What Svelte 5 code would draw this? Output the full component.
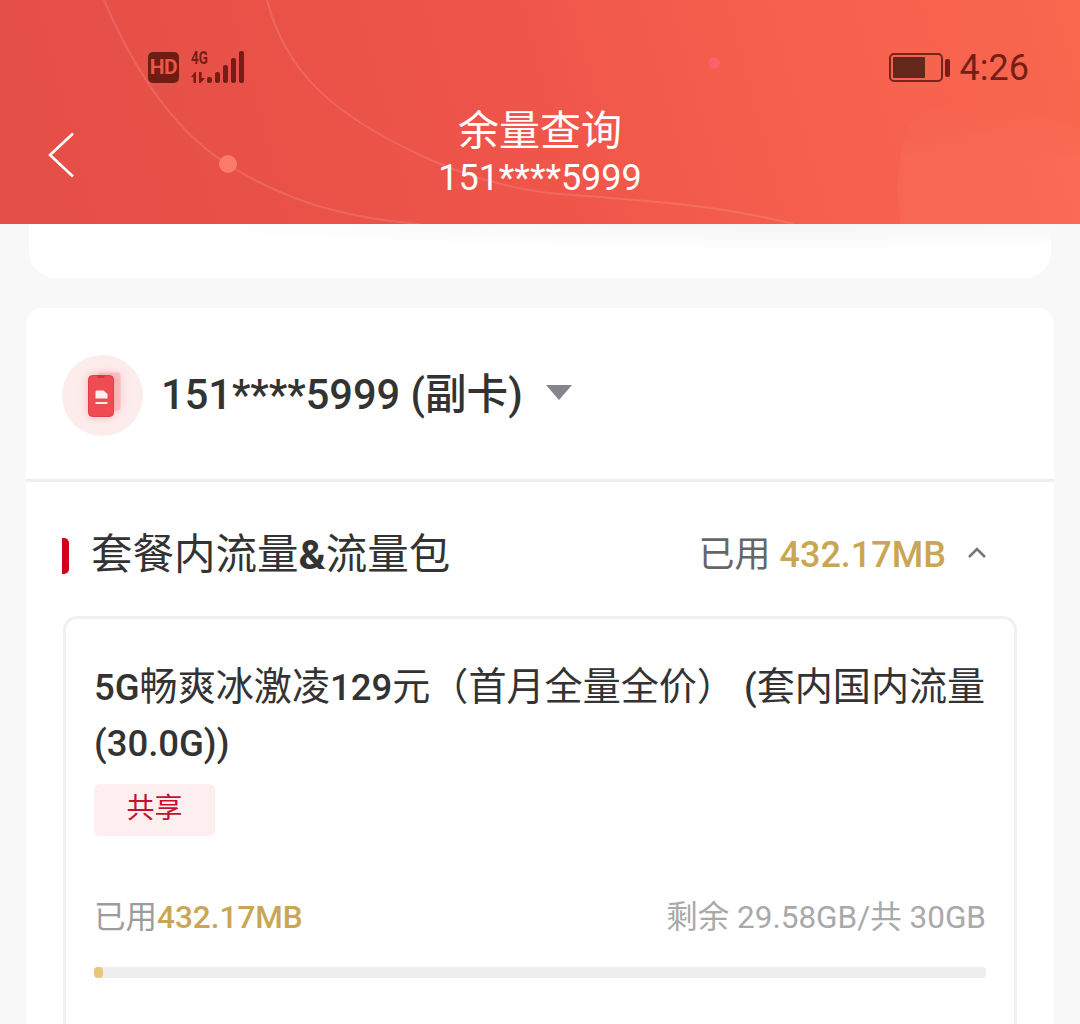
<script>
	const used = '432.17MB';
	const phone = '151****5999';
	const bars = [6, 11, 18, 25, 32];
</script>

<div class="page">
	<header class="top">
		<svg class="deco" viewBox="0 0 1080 224" preserveAspectRatio="none" aria-hidden="true">
			<defs>
				<linearGradient id="blobfade" x1="0" y1="0" x2="0" y2="1">
					<stop offset="0" stop-color="#fff" stop-opacity="0" />
					<stop offset="0.5" stop-color="#fff" stop-opacity="0.035" />
				</linearGradient>
			</defs>
			<path d="M104 0C125 50 165 125 227 164C280 198 340 218 420 224" class="line" />
			<path d="M267 0C285 70 330 115 431 160C480 182 530 192 560 194C640 200 720 205 793 224" class="line" />
			<path d="M900 224C894 170 900 130 925 105C960 100 1040 110 1080 130V224Z" fill="url(#blobfade)" />
			<circle cx="228" cy="164" r="9" fill="#fb7a6c" />
			<circle cx="714" cy="63" r="6" fill="#f9616b" />
		</svg>

		<div class="status">
			<div class="status-left">
				<span class="hd">HD</span>
				<div class="net">
					<span class="net-label">4G</span>
					<svg class="arrows" width="16" height="11" viewBox="0 0 16 11" aria-hidden="true">
						<path d="M4 0L0 5H2.4V11H5V0ZM8 0H10.6V6H14L9.6 11H8Z" fill="#751e15" />
					</svg>
				</div>
				<div class="bars">
					{#each bars as h}
						<i style="height: {h}px"></i>
					{/each}
				</div>
			</div>
			<div class="status-right">
				<span class="battery"><i></i></span>
				<span class="nub"></span>
				<span class="time">4:26</span>
			</div>
		</div>

		<div class="nav">
			<svg class="back" width="28" height="46" viewBox="0 0 28 46" aria-hidden="true">
				<path d="M25 1.500L2 23L25 44.500" fill="none" stroke="#fff" stroke-width="2.600" />
			</svg>
			<div class="nav-title">
				<h1>余量查询</h1>
				<p>{phone}</p>
			</div>
		</div>
	</header>

	<div class="peek"></div>

	<section class="card">
		<div class="account">
			<span class="avatar">
				<svg width="40" height="48" viewBox="0 0 40 48" aria-hidden="true">
					<rect x="14.500" y="0.500" width="23" height="38" rx="3" fill="#f8a9ab" opacity="0.6" />
					<rect x="5.500" y="3.500" width="25" height="41" rx="4" fill="#ee4b52" stroke="#dc3f48" />
					<path d="M14 3.500H22L20.500 6H15.500Z" fill="#c93a42" />
					<path d="M12.500 20C12.500 19 13.200 18.500 14 18.500H20.500L24.500 22V26.500H12.500Z" fill="#fdeeee" />
					<rect x="12.500" y="30" width="12" height="2" fill="#fdeeee" />
				</svg>
			</span>
			<span class="number">{phone} (副卡)</span>
			<span class="caret"></span>
		</div>

		<div class="section-head">
			<span class="mark"></span>
			<h2>套餐内流量<b>&amp;</b>流量包</h2>
			<span class="used">已用 <b>{used}</b></span>
			<svg class="chev" width="20" height="12" viewBox="0 0 20 12" aria-hidden="true">
				<path d="M2 11L10 3L18 11" fill="none" stroke="#777" stroke-width="2.600" />
			</svg>
		</div>

		<div class="plan">
			<h3>5G<span>畅爽冰激凌</span>129<span>元（首月全量全价）</span> (<span>套内国内流量</span><br />(30.0G))</h3>
			<span class="tag">共享</span>
			<div class="usage">
				<span class="usage-left">已用<b>{used}</b></span>
				<span class="usage-right">剩余 29.58GB/共 30GB</span>
			</div>
			<div class="track"><div class="fill" style="width: 1%"></div></div>
		</div>
	</section>
</div>

<style>
	:global(body) {
		margin: 0;
		background: #f8f8f8;
		font-family: Roboto, 'Noto Sans CJK SC', sans-serif;
	}

	.page {
		height: 1024px;
		overflow: hidden;
		background: #f8f8f8;
	}

	.top {
		position: relative;
		height: 224px;
		box-sizing: border-box;
		padding-top: 46px;
		background: linear-gradient(75deg, #e34e47 0%, #ee5449 45%, #f6604d 75%, #f9674f 100%);
		color: #fff;
		overflow: hidden;
	}

	.deco {
		position: absolute;
		inset: 0;
		width: 100%;
		height: 100%;
	}

	.line {
		fill: none;
		stroke: rgba(255, 255, 255, 0.12);
		stroke-width: 2;
	}

	.status {
		position: relative;
		display: flex;
		justify-content: space-between;
		align-items: center;
		height: 40px;
		padding: 0 51px 0 148px;
		color: #751e15;
	}

	.status-left {
		display: flex;
		align-items: flex-end;
	}

	.hd {
		width: 31px;
		height: 31px;
		border-radius: 5px;
		background: #6f1c14;
		color: #e9564a;
		font-size: 21px;
		font-weight: 700;
		line-height: 31px;
		text-align: center;
		letter-spacing: -0.5px;
	}

	.net {
		display: flex;
		flex-direction: column;
		justify-content: space-between;
		height: 33px;
		margin-left: 12px;
		width: 16px;
	}

	.net-label {
		font-size: 19px;
		font-weight: 700;
		line-height: 16px;
		transform: scaleX(0.72);
		transform-origin: left;
	}

	.bars {
		display: flex;
		align-items: flex-end;
		gap: 3px;
	}

	.bars i {
		width: 5px;
		background: #751e15;
		border-radius: 2px;
	}

	.status-right {
		display: flex;
		align-items: center;
		margin-top: 3px;
	}

	.battery {
		box-sizing: border-box;
		width: 54px;
		height: 29px;
		padding: 2px;
		border: 2px solid #7a2418;
		border-radius: 5px;
	}

	.battery i {
		display: block;
		width: 32px;
		height: 100%;
		background: #64271c;
		border-radius: 1px;
	}

	.nub {
		width: 5px;
		height: 18px;
		margin-left: 2px;
		background: #751e15;
		border-radius: 2px;
	}

	.time {
		margin-left: 10px;
		font-size: 36px;
		line-height: 40px;
	}

	.nav {
		position: relative;
		display: grid;
		grid-template-columns: 1fr auto 1fr;
		align-items: center;
		padding: 21px 48px 0;
	}

	.back {
		margin-top: 2px;
	}

	.nav-title {
		grid-column: 2;
		text-align: center;
	}

	h1 {
		margin: 0;
		font-size: 41px;
		font-weight: 400;
		line-height: 48px;
	}

	.nav-title p {
		margin: 0;
		font-size: 36px;
		line-height: 46px;
	}

	.peek {
		height: 54px;
		margin: 0 29px 30px;
		background: radial-gradient(ellipse 650px 26px at 75% 0, #f5f5f5, #fff);
		border-radius: 0 0 26px 26px;
	}

	.card {
		height: 800px;
		margin: 0 26px;
		background: #fff;
		border-radius: 16px;
	}

	.account {
		display: flex;
		align-items: center;
		height: 171px;
		padding: 0 36px;
		border-bottom: 3px solid #eeeeee;
	}

	.avatar {
		display: flex;
		align-items: center;
		justify-content: center;
		width: 81px;
		height: 81px;
		margin-top: 4px;
		border-radius: 50%;
		background: #fdecec;
	}

	.avatar svg {
		filter: drop-shadow(0 0 4px rgba(238, 75, 82, 0.35));
	}

	.number {
		margin: 0 0 6px 18px;
		font-size: 41.600px;
		font-weight: 500;
		color: #333333;
	}

	.caret {
		width: 0;
		height: 0;
		margin: 0 0 2px 23px;
		border-left: 13px solid transparent;
		border-right: 13px solid transparent;
		border-top: 15px solid #85858b;
	}

	.section-head {
		display: flex;
		align-items: center;
		height: 134px;
		padding: 2px 67px 0 36px;
		box-sizing: border-box;
	}

	.mark {
		width: 7px;
		height: 36px;
		margin-top: 12px;
		background: #d0021b;
		border-radius: 0 5px 5px 0;
	}

	h2 {
		flex: 1;
		margin: 0 0 0 22px;
		padding-top: 2px;
		font-size: 41.500px;
		font-weight: 400;
		color: #333333;
	}

	h2 b {
		font-weight: 700;
	}

	.used {
		margin-top: 2px;
		font-size: 36px;
		color: #666666;
	}

	.used b {
		font-weight: 500;
		color: #c9a654;
	}

	.chev {
		margin: 4px 0 0 21px;
	}

	.plan {
		box-sizing: border-box;
		height: 500px;
		margin: 0 37px;
		padding: 40px 28px;
		border: 3px solid #f0f0f2;
		border-radius: 14px;
	}

	h3 {
		height: 112px;
		margin: 0;
		font-size: 36.500px;
		font-weight: 500;
		line-height: 56px;
		white-space: nowrap;
		color: #333333;
	}

	h3 span {
		font-size: 38.100px;
		font-weight: 400;
	}

	.tag {
		display: block;
		width: 121px;
		height: 52px;
		margin: 13px 0 0;
		background: #fdeef0;
		border-radius: 6px;
		color: #c8102e;
		font-size: 28px;
		line-height: 50px;
		text-align: center;
	}

	.usage {
		display: flex;
		justify-content: space-between;
		align-items: center;
		margin-top: 60px;
		font-size: 31.500px;
		line-height: 44px;
	}

	.usage-left {
		color: #9c9c9c;
	}

	.usage-left b {
		font-weight: 500;
		color: #c9a654;
	}

	.usage-right {
		color: #a9a9a9;
	}

	.track {
		height: 11px;
		margin: 27px 0 0;
		background: #eeeeee;
		border-radius: 4px;
	}

	.fill {
		height: 100%;
		background: #e8c67c;
		border-radius: 4px;
	}
</style>
